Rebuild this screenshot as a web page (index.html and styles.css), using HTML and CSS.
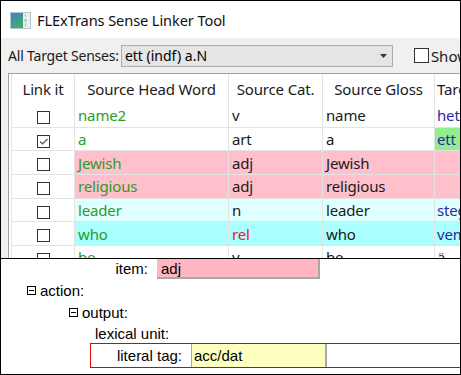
FILE: index.html
```html
<!DOCTYPE html>
<html lang="en">
<head>
    <meta charset="UTF-8">
    <meta name="viewport" content="width=device-width, initial-scale=1.0">
    <title>FLExTrans Sense Linker Tool</title>
    <link rel="stylesheet" href="styles.css">
</head>
<body>

    <div class="screen">
        <div class="app">
            <!-- Window title -->
            <div class="titlebar">
                <svg class="app-icon" width="21" height="17" viewBox="0 0 21 17">
                    <defs>
                        <linearGradient id="iconFill" x1="0" y1="0" x2="0.4" y2="1">
                            <stop offset="0" stop-color="#3f7fc8"/>
                            <stop offset="1" stop-color="#3fae6c"/>
                        </linearGradient>
                    </defs>
                    <rect x="0.5" y="0.5" width="20" height="16" fill="#eef1f3" stroke="#b9c2ca"/>
                    <rect x="1" y="1" width="12" height="15" fill="url(#iconFill)"/>
                    <rect x="14.5" y="2" width="2" height="3" fill="#c9d3da"/>
                    <rect x="14.5" y="7" width="2" height="3" fill="#8fd3a0"/>
                    <rect x="14.5" y="11" width="2" height="4" fill="#c9d3da"/>
                </svg>
                <span class="title">FLExTrans Sense Linker Tool</span>
            </div>

            <!-- Filter bar -->
            <div class="toolbar">
                <span class="label">All Target Senses:</span>
                <div class="combo">
                    <span>ett (indf) a.N</span>
                    <svg class="combo-arrow" width="7" height="4" viewBox="0 0 7 4"><path d="M0 0h7L3.5 4z" fill="#333"/></svg>
                </div>
                <span class="show"><span class="box"></span>Show</span>
            </div>

            <!-- Sense grid -->
            <div class="grid-frame">
                <table class="senses">
                    <colgroup>
                        <col class="c-link">
                        <col class="c-head">
                        <col class="c-cat">
                        <col class="c-gloss">
                        <col class="c-target">
                    </colgroup>
                    <thead>
                        <tr>
                            <th>Link it</th>
                            <th>Source Head Word</th>
                            <th>Source Cat.</th>
                            <th>Source Gloss</th>
                            <th class="cut">Target Head Word</th>
                        </tr>
                    </thead>
                    <tbody>
                        <tr>
                            <td class="chk"><span class="box"></span></td>
                            <td class="head">name2</td>
                            <td>v</td>
                            <td>name</td>
                            <td class="target">het</td>
                        </tr>
                        <tr>
                            <td class="chk"><span class="box checked"><svg width="11" height="11" viewBox="0 0 11 11"><path d="M2 5.5l2.5 2.5L9.5 3" fill="none" stroke="#555" stroke-width="1.2"/></svg></span></td>
                            <td class="head">a</td>
                            <td>art</td>
                            <td>a</td>
                            <td class="target linked">ett</td>
                        </tr>
                        <tr class="pink">
                            <td class="chk"><span class="box"></span></td>
                            <td class="head">Jewish</td>
                            <td>adj</td>
                            <td>Jewish</td>
                            <td class="target"></td>
                        </tr>
                        <tr class="pink">
                            <td class="chk"><span class="box"></span></td>
                            <td class="head">religious</td>
                            <td>adj</td>
                            <td>religious</td>
                            <td class="target"></td>
                        </tr>
                        <tr class="pale-cyan">
                            <td class="chk"><span class="box"></span></td>
                            <td class="head">leader</td>
                            <td>n</td>
                            <td>leader</td>
                            <td class="target">steg</td>
                        </tr>
                        <tr class="cyan">
                            <td class="chk"><span class="box"></span></td>
                            <td class="head">who</td>
                            <td class="warn">rel</td>
                            <td>who</td>
                            <td class="target">vem</td>
                        </tr>
                        <tr>
                            <td class="chk"><span class="box"></span></td>
                            <td class="head">be</td>
                            <td>v</td>
                            <td>be</td>
                            <td class="target">ä</td>
                        </tr>
                    </tbody>
                </table>
            </div>
        </div>

        <!-- Rule view -->
        <div class="rule-panel">
            <div class="field">
                <span class="field-label">item:</span>
                <span class="field-value pink-value">adj</span>
            </div>
            <div class="node level-1">
                <span class="toggle"></span>action:
            </div>
            <div class="node level-2">
                <span class="toggle"></span>output:
            </div>
            <div class="node level-3">lexical unit:</div>
            <div class="field selected">
                <span class="field-label">literal tag:</span>
                <span class="field-value yellow-value">acc/dat</span>
            </div>
        </div>
    </div>

</body>
</html>
```

FILE: styles.css
```css
html, body {
    margin: 0;
    padding: 0;
    background: #ffffff;
}

.screen {
    width: 461px;
    height: 375px;
    box-sizing: border-box;
    border: 1px solid #000000;
    overflow: hidden;
    background: #ffffff;
}

.app {
    height: 257px;
    overflow: hidden;
    background: #f0f0f0;
    font-family: "Noto Sans", "Open Sans", sans-serif;
    color: #1a1a1a;
}

/* Title bar */
.titlebar {
    height: 37px;
    background: #ffffff;
    display: flex;
    align-items: center;
    padding-left: 9px;
}

.app-icon {
    flex: none;
    margin-right: 6px;
    margin-top: 1px;
}

.title {
    font-size: 14.6px;
    color: #111111;
    letter-spacing: -0.1px;
}

/* Toolbar */
.toolbar {
    height: 35px;
    display: flex;
    align-items: center;
    padding-left: 7px;
    font-size: 14px;
    white-space: nowrap;
}

.label {
    flex: none;
    margin-right: 2px;
    letter-spacing: -0.2px;
}

.combo {
    flex: none;
    width: 272px;
    height: 22px;
    box-sizing: border-box;
    border: 1px solid #adadad;
    background: #e5e5e5;
    display: flex;
    align-items: center;
    justify-content: space-between;
    padding: 0 5px 0 3px;
    color: #000000;
}

.combo-arrow {
    flex: none;
}

.show {
    flex: none;
    display: flex;
    align-items: center;
    margin-left: 21px;
    font-size: 15px;
}

.show .box {
    width: 15px;
    height: 15px;
    margin-right: 2px;
}

.box {
    display: inline-block;
    box-sizing: border-box;
    width: 13px;
    height: 13px;
    border: 1px solid #333333;
    background: #ffffff;
    vertical-align: middle;
}

.box svg {
    display: block;
    margin: 0;
}

/* Sense grid */
.grid-frame {
    margin-left: 7px;
    height: 190px;
    border-top: 1px solid #a0a0a0;
    border-left: 1px solid #a0a0a0;
    background: #ffffff;
    padding-left: 2px;
}

.senses {
    table-layout: fixed;
    width: 505px;
    border-collapse: collapse;
    font-size: 15px;
    letter-spacing: -0.15px;
}

.c-link { width: 63px; }
.c-head { width: 154px; }
.c-cat { width: 94px; }
.c-gloss { width: 112px; }
.c-target { width: 82px; }

.senses th {
    height: 30px;
    font-weight: normal;
    text-align: center;
    color: #1a1a1a;
    border-left: 1px solid #e3e3e3;
    border-right: 1px solid #e3e3e3;
    padding: 0;
    white-space: nowrap;
    overflow: hidden;
}

.senses th.cut {
    text-align: left;
    padding-left: 2px;
}

.senses td {
    height: 22.7px;
    padding: 0 0 0 3px;
    border: 1px solid #e3e3e3;
    border-top: none;
    white-space: nowrap;
    overflow: hidden;
    color: #1a1a1a;
    line-height: 20px;
}

.senses td.chk {
    text-align: center;
    padding: 0;
}

.senses td.head {
    color: #2e9a2a;
}

.senses td.target {
    color: #2a2a9e;
    padding-left: 2px;
}

.senses td.warn {
    color: #e8202a;
}

.senses td.linked {
    background: #90ee90;
}

.senses tr.pink td {
    background: #ffc0cb;
}

.senses tr.pink td.chk {
    background: #ffffff;
}

.senses tr.pale-cyan td {
    background: #e0ffff;
}

.senses tr.cyan td {
    background: #aaffff;
}

.senses tr.pale-cyan td.chk,
.senses tr.cyan td.chk {
    background: #ffffff;
}

/* Rule view */
.rule-panel {
    border-top: 1px solid #000000;
    font-family: "Liberation Sans", Arial, sans-serif;
    font-size: 15px;
    color: #000000;
}

.field {
    display: flex;
    align-items: stretch;
    height: 20px;
}

.field-label {
    width: 147px;
    text-align: right;
    line-height: 20px;
    margin-right: 9px;
}

.field-value {
    box-sizing: border-box;
    padding-left: 4px;
    line-height: 19px;
}

.pink-value {
    width: 163px;
    background: #ffb6c1;
    border-right: 2px solid #a8a8a8;
    border-bottom: 2px solid #a8a8a8;
}

.node {
    display: flex;
    align-items: center;
    height: 22px;
}

.level-1 {
    padding-left: 26px;
}

.level-2 {
    padding-left: 68px;
}

.level-3 {
    padding-left: 94px;
    height: 20px;
}

.toggle {
    position: relative;
    width: 9px;
    height: 9px;
    box-sizing: border-box;
    border: 1px solid #000000;
    margin-right: 4px;
}

.toggle::after {
    content: "";
    position: absolute;
    left: 1px;
    right: 1px;
    top: 3px;
    height: 1px;
    background: #000000;
}

.field.selected {
    margin-left: 89px;
    height: 25px;
    box-sizing: border-box;
    border: 1px solid #e00000;
    border-right: none;
}

.field.selected .field-label {
    width: 91px;
    line-height: 23px;
}

.yellow-value {
    width: 136px;
    background: #ffffc0;
    border-left: 1px solid #a8a8a8;
    border-right: 2px solid #a8a8a8;
    line-height: 23px;
    padding-left: 2px;
}
```
